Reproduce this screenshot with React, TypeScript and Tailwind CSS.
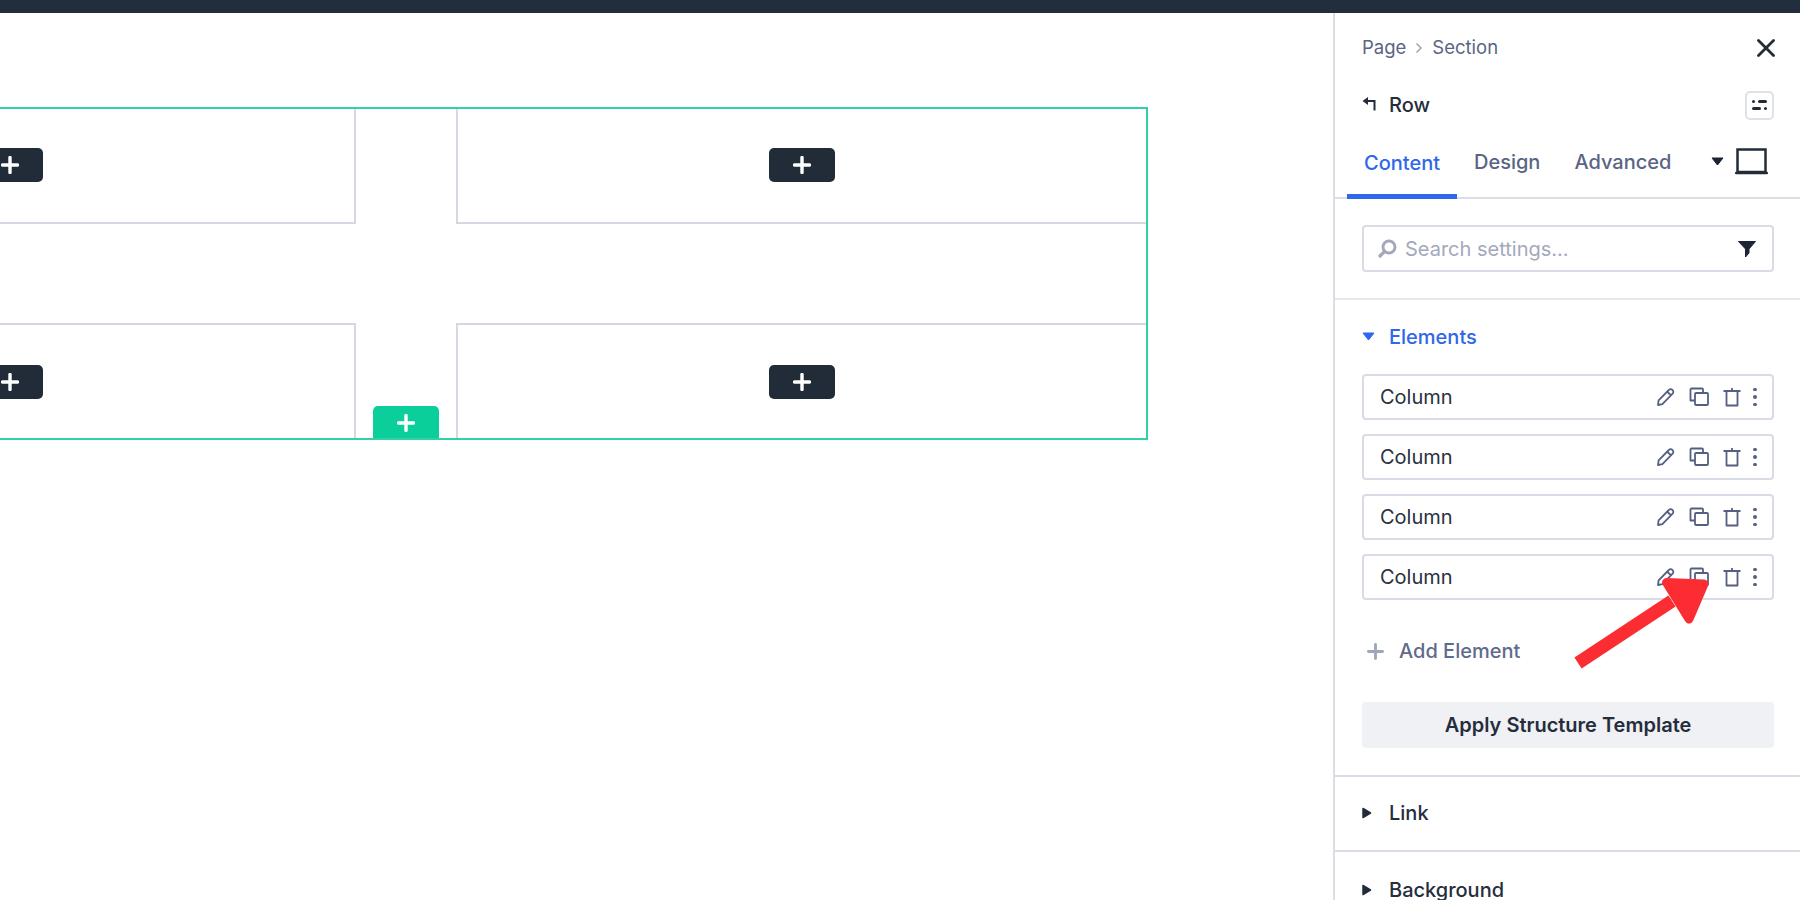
const Plus = ({ size = 18, w = 3.4, color = "#ffffff" }: { size?: number; w?: number; color?: string }) => (
  <svg width={size} height={size} viewBox="0 0 18 18" fill="none">
    <path d="M9 1.500v15M1.500 9h15" stroke={color} strokeWidth={w} strokeLinecap="round" />
  </svg>
);

const DarkAdd = () => (
  <div className="w-[66px] h-[34px] rounded-[5px] bg-[#222c39] flex items-center justify-center">
    <Plus />
  </div>
);

const Cell = ({ classes }: { classes: string }) => (
  <div className={`flex items-center justify-center border-[#d6d7e1] ${classes}`}>
    <DarkAdd />
  </div>
);

const ColumnRow = () => (
  <div className="h-[46px] rounded-[4px] border-2 border-[#d9dbe5] flex items-center pl-[16px] pr-[15px] bg-white">
    <span className="flex-1 text-[20px] text-[#2a3140]">Column</span>
    <div className="flex items-center gap-[13px] text-[#555f80]">
      <svg width="20" height="20" viewBox="0 0 20 20" fill="none" stroke="currentColor" strokeWidth="1.800" strokeLinejoin="round">
        <path d="M2 18l.6-4.600L12.800 3a2.400 2.400 0 0 1 3.600 0l.2.200a2.400 2.400 0 0 1 0 3.500L6.400 17.200 2 18z" />
        <path d="M11.500 5l3.600 3.400" />
      </svg>
      <svg width="20" height="20" viewBox="0 0 20 20" fill="none" stroke="currentColor" strokeWidth="1.800" strokeLinejoin="round">
        <path d="M6 13.500H1.500V2.500a1 1 0 0 1 1-1H13a1 1 0 0 1 1 1V6" />
        <rect x="6" y="6" width="13" height="12" rx="1" />
      </svg>
      <svg width="20" height="20" viewBox="0 0 20 20" fill="none" stroke="currentColor" strokeWidth="1.800" strokeLinejoin="round">
        <path d="M1.500 4h17M10 1v3M4.500 4v14.500h11V4" />
      </svg>
      <div className="flex flex-col items-center gap-[4px] w-[4px] ml-[-2px]">
        <span className="w-[3.500px] h-[3.500px] rounded-full bg-[#555f80]" />
        <span className="w-[3.500px] h-[3.500px] rounded-full bg-[#555f80]" />
        <span className="w-[3.500px] h-[3.500px] rounded-full bg-[#555f80]" />
      </div>
    </div>
  </div>
);

const ClosedSection = ({ title, classes }: { title: string; classes: string }) => (
  <div className={`flex items-center pl-[27px] shrink-0 border-[#d9dbe5] ${classes}`}>
    <svg width="10" height="12" viewBox="0 0 10 12" className="mr-[17px]">
      <path d="M1 1.500 8.500 6 1 10.500z" fill="#222c39" stroke="#222c39" strokeWidth="1.500" strokeLinejoin="round" />
    </svg>
    <span className="text-[20px] font-medium text-[#252d3c]">{title}</span>
  </div>
);

export default function App() {
  return (
    <div className="relative h-screen w-full overflow-hidden bg-white flex flex-col font-['Inter',sans-serif]">
      <div className="h-[13px] shrink-0 bg-[#222d3e]" />
      <div className="flex-1 min-h-0 flex">
        <main className="flex-1 min-w-0 overflow-hidden pt-[94px]">
          <div className="relative ml-[-336px] w-[1484px] h-[333px] border-2 border-[#30d0a9] grid grid-cols-[690px_690px] grid-rows-[115px_115px] gap-x-[100px] gap-y-[99px]">
            <Cell classes="border-r-2 border-b-2 pb-[1px]" />
            <Cell classes="border-l-2 border-b-2 pb-[1px]" />
            <Cell classes="border-r-2 border-t-2" />
            <Cell classes="border-l-2 border-t-2" />
            <div className="absolute left-[707px] bottom-0 w-[66px] h-[32px] pt-[1px] rounded-t-[5px] bg-[#0acf9a] flex items-center justify-center">
              <Plus />
            </div>
          </div>
        </main>

        <aside className="w-[467px] shrink-0 border-l-2 border-[#dcdde5] flex flex-col">
          <div className="h-[68px] shrink-0 flex items-center justify-between pl-[27px] pr-[25px]">
            <div className="flex items-center text-[18.500px] text-[#5a6484] mt-[1px]">
              <span>Page</span>
              <svg width="8" height="12" viewBox="0 0 8 12" fill="none" className="mx-[9px]">
                <path d="M1.500 1.500 6 6l-4.500 4.500" stroke="#a0a6ba" strokeWidth="1.500" />
              </svg>
              <span>Section</span>
            </div>
            <svg width="18" height="18" viewBox="0 0 18 18" fill="none" className="mt-[1px]">
              <path d="M1.500 1.500l15 15M16.500 1.500l-15 15" stroke="#222c39" strokeWidth="2.800" strokeLinecap="round" />
            </svg>
          </div>

          <div className="h-[48px] shrink-0 flex items-center justify-between pl-[27px] pr-[26px]">
            <div className="flex items-center">
              <svg width="14" height="14" viewBox="0 0 14 14" fill="none" className="mr-[13px] mt-[-3px]">
                <path d="M12.500 13.500V4H4" stroke="#222c39" strokeWidth="2" />
                <path d="M6 0 .500 4 6 8z" fill="#222c39" />
              </svg>
              <span className="text-[20px] font-medium text-[#252d3c]">Row</span>
            </div>
            <div className="w-[29px] h-[29px] rounded-[5px] border-2 border-[#dfe1e9] flex flex-col items-center justify-center gap-[4px]">
              <div className="flex gap-[3px]">
                <span className="w-[3px] h-[3px] rounded-full bg-[#222c39]" />
                <span className="w-[9px] h-[3px] rounded-full bg-[#222c39]" />
              </div>
              <div className="flex gap-[3px]">
                <span className="w-[9px] h-[3px] rounded-full bg-[#222c39]" />
                <span className="w-[3px] h-[3px] rounded-full bg-[#222c39]" />
              </div>
            </div>
          </div>

          <div className="h-[70px] shrink-0 flex items-stretch pl-[12px] pr-[32px] border-b-2 border-[#dcdde5]">
            <div className="px-[17px] pt-[2px] flex items-center border-b-[5px] border-[#2f66ec] mb-[-2px] text-[20px] font-medium text-[#2f66ec]">Content</div>
            <div className="px-[17px] pb-[3px] flex items-center text-[20px] font-medium text-[#5a6484]">Design</div>
            <div className="px-[17px] pb-[3px] flex items-center text-[20px] font-medium text-[#5a6484]">Advanced</div>
            <div className="flex-1" />
            <div className="flex items-center pb-[4px]">
              <svg width="13" height="9" viewBox="0 0 13 9" className="mr-[11px]">
                <path d="M1 1h11L6.500 8z" fill="#1c2433" stroke="#1c2433" strokeWidth="1" strokeLinejoin="round" />
              </svg>
              <svg width="33" height="27" viewBox="0 0 33 27" fill="none">
                <rect x="2.500" y="1.500" width="28" height="22.500" stroke="#222c39" strokeWidth="2.500" />
                <path d="M1.200 25h30.600" stroke="#222c39" strokeWidth="2.500" strokeLinecap="round" />
              </svg>
            </div>
          </div>

          <div className="shrink-0 pl-[27px] pr-[26px] pt-[26px] pb-[26px] border-b-2 border-[#e6e7ed]">
            <div className="h-[47px] rounded-[4px] border-2 border-[#d9dbe5] flex items-center pl-[14px] pr-[16px]">
              <svg width="19" height="19" viewBox="0 0 19 19" fill="none" className="mr-[8px]">
                <circle cx="11" cy="8" r="6" stroke="#a3a9ba" strokeWidth="3" />
                <path d="M6 13l-4 4" stroke="#a3a9ba" strokeWidth="3.200" strokeLinecap="round" />
              </svg>
              <span className="flex-1 text-[20px] text-[#a3a9bb]">Search settings...</span>
              <svg width="18" height="18" viewBox="0 0 18 18">
                <path d="M.500 1.500h17L11 9v4l-3.500 4V9z" fill="#1e2635" stroke="#1e2635" strokeLinejoin="round" />
              </svg>
            </div>
          </div>

          <div className="shrink-0 pl-[27px] pr-[26px] pt-[23px] pb-[27px] border-b-2 border-[#d9dbe5]">
            <div className="h-[28px] mb-[23px] flex items-center">
              <svg width="13" height="9" viewBox="0 0 13 9" className="mr-[14px] mt-[-2px]">
                <path d="M1 1h11L6.500 8z" fill="#2f66ec" stroke="#2f66ec" strokeWidth="1" strokeLinejoin="round" />
              </svg>
              <span className="text-[20px] font-medium text-[#2f66ec]">Elements</span>
            </div>
            <div className="flex flex-col gap-[14px]">
              <ColumnRow />
              <ColumnRow />
              <ColumnRow />
              <ColumnRow />
            </div>
            <div className="h-[28px] mt-[37px] flex items-center pl-[5px]">
              <Plus size={17} w={3} color="#a0a6ba" />
              <span className="ml-[15px] text-[20px] font-medium text-[#5f6a8c]">Add Element</span>
            </div>
            <button className="mt-[37px] w-full h-[46px] rounded-[4px] bg-[#f0f1f5] text-[20px] font-semibold text-[#252d3c]">
              Apply Structure Template
            </button>
          </div>

          <ClosedSection title="Link" classes="h-[75px] pb-[2px] border-b-2" />
          <ClosedSection title="Background" classes="h-[75px]" />
        </aside>
      </div>

      <svg width="150" height="110" viewBox="0 0 150 110" className="absolute left-[1570px] top-[570px] pointer-events-none">
        <path d="M8 93 102 31" stroke="#fb2d32" strokeWidth="13" />
        <path d="M96.500 12.500 134 14 119 49z" fill="#fb2d32" stroke="#fb2d32" strokeWidth="9" strokeLinejoin="round" />
      </svg>
    </div>
  );
}
